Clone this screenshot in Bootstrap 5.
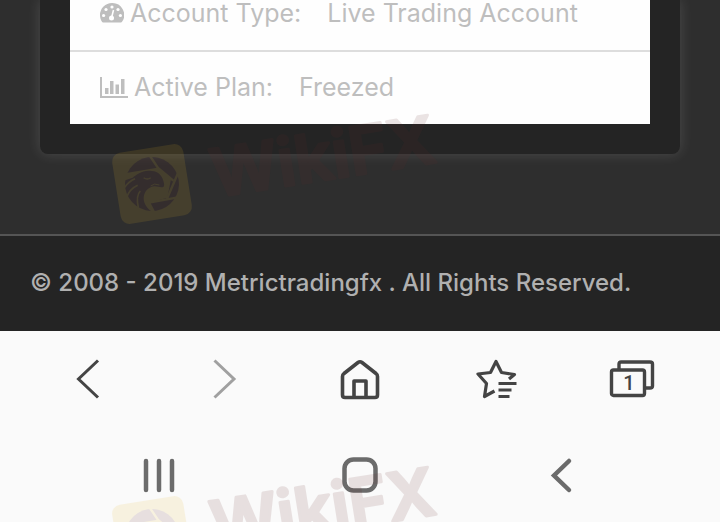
<!DOCTYPE html>
<html lang="en">
<head>
<meta charset="utf-8">
<meta name="viewport" content="width=device-width, initial-scale=1">
<title>Account details</title>
<link href="https://cdn.jsdelivr.net/npm/bootstrap@5.3.0/dist/css/bootstrap.min.css" rel="stylesheet">
<style>
  body { background: #2e2e2e; font-family: Inter, "Open Sans", sans-serif; font-size: 24px; line-height: 30px; font-weight: 500; }
  .account-panel { background: #242424; margin: 0 40px 80px; padding: 0 30px 30px; border-radius: 0 0 8px 8px; box-shadow: 0 0 14px rgba(255,255,255,.14); }
  .detail-list { background: #fefefe; color: #bebebe; font-size: 25px; font-weight: 400; }
  .detail-row { padding: 20px 30px 22px; }
  .detail-row:first-child { padding-top: 0; padding-bottom: 24px; line-height: 26px; border-bottom: 2px solid #ddd; }
  .detail-label { gap: 6px; margin-right: 26px; }
  .site-footer { background: #242424; color: #b0b0b0; border-top: 2px solid #555; padding: 32px 30px 33px; }
  .device-bars { background: #fafafa; color: #444; }
  .bar-row { height: 96px; padding: 0 20px; }
  .system-row { padding: 0 58px; color: #6b6b6b; }
  .bar-btn { flex: 1 1 0; height: 96px; padding: 0; border: 0; background: none; color: inherit; line-height: 1; }
  .bar-btn:disabled { color: #a0a0a0; }
  .stamp-layer { pointer-events: none; }
</style>
<script src="https://cdn.jsdelivr.net/npm/bootstrap@5.3.0/dist/js/bootstrap.bundle.min.js"></script>
</head>
<body class="overflow-hidden">
<div class="position-relative overflow-hidden">
  <main>
    <section class="account-panel">
      <dl class="detail-list mb-0">
        <div class="detail-row d-flex">
          <dt class="detail-label d-flex align-items-center fw-normal"><svg width="24" height="20" viewBox="0 0 24 20" aria-hidden="true"><path fill="currentColor" d="M12 0A12 12 0 0 0 0 12c0 2.600.6 4.600 1.800 6.600.3.600.8.900 1.400.900h17.600c.6 0 1.100-.3 1.400-.9A12 12 0 0 0 12 0z"/><g fill="#fff"><circle cx="12" cy="4" r="1.600"/><circle cx="6" cy="6.500" r="1.600"/><circle cx="18" cy="6.500" r="1.600"/><circle cx="3.600" cy="12.500" r="1.600"/><circle cx="20.400" cy="12.500" r="1.600"/><circle cx="11.500" cy="15" r="2.500"/></g><path d="M11.500 15l2-8" stroke="#fff" stroke-width="1.500"/></svg><span>Account Type:</span></dt>
          <dd class="mb-0">Live Trading Account</dd>
        </div>
        <div class="detail-row d-flex">
          <dt class="detail-label d-flex align-items-center fw-normal"><svg width="28" height="21" viewBox="0 0 28 21" aria-hidden="true"><path fill="currentColor" d="M0 0h2v19h26v2H0zM5 11h3.500v6H5zM10 4h3.500v13H10zM15.500 7.500H19V17h-3.500zM21 2h3.500v15H21z"/></svg><span>Active Plan:</span></dt>
          <dd class="mb-0">Freezed</dd>
        </div>
      </dl>
    </section>
  </main>
  <footer class="site-footer">© 2008 - 2019 Metrictradingfx . All Rights Reserved.</footer>
  <div class="device-bars">
    <nav class="bar-row d-flex" aria-label="Browser">
      <button class="bar-btn" type="button" aria-label="Back"><svg width="44" height="44" viewBox="0 0 44 44" fill="none" stroke="currentColor" stroke-width="3"><path d="M32 3.500L12.500 22 32 40.500"/></svg></button>
      <button class="bar-btn" type="button" aria-label="Forward" disabled><svg width="44" height="44" viewBox="0 0 44 44" fill="none" stroke="currentColor" stroke-width="3"><path d="M12.500 3.500L32 22 12.500 40.500"/></svg></button>
      <button class="bar-btn" type="button" aria-label="Home"><svg width="44" height="44" viewBox="0 0 44 44" fill="none" stroke="currentColor" stroke-width="3.600" stroke-linejoin="round"><path d="M6 16.500Q4.500 17.500 4.500 19.500V38Q4.500 40.500 7 40.500H37Q39.500 40.500 39.500 38V19.500Q39.500 17.500 38 16.500L24 5.500Q22 4 20 5.500zM16 40V24H28V40"/></svg></button>
      <button class="bar-btn" type="button" aria-label="Bookmarks"><svg width="44" height="44" viewBox="0 0 44 44" fill="none" stroke="currentColor" stroke-width="3.200"><path stroke-linejoin="round" d="M20.500 34L10.500 39.500 12.500 26.500 4 17 16.500 15.500 22 4.500 27.500 15.500 40.500 17.500 35 22"/><path d="M24.500 26.500h18M24.500 33h13M24.500 39.500h11"/></svg></button>
      <button class="bar-btn" type="button" aria-label="Tabs, 1 open"><svg width="46" height="44" viewBox="0 0 46 44" fill="none" stroke="currentColor" stroke-width="3.400" stroke-linejoin="round"><path d="M10 12V7Q10 5 12 5H41Q43.500 5 43.500 7V29Q43.500 31 41 31H36"/><rect x="2.500" y="13" width="33" height="25.500" rx="2"/><text x="20" y="33" fill="currentColor" stroke="none" text-anchor="middle" font-family="Roboto, sans-serif" font-size="20" font-weight="500">1</text></svg></button>
    </nav>
    <nav class="bar-row system-row d-flex" aria-label="System">
      <button class="bar-btn" type="button" aria-label="Recent apps"><svg width="40" height="40" viewBox="0 0 40 40" stroke="currentColor" stroke-width="4.500" stroke-linecap="round"><path d="M7 6v29M20 6v29M33 6v29"/></svg></button>
      <button class="bar-btn" type="button" aria-label="Home screen"><svg width="40" height="40" viewBox="0 0 40 40" fill="none" stroke="currentColor" stroke-width="4.500"><rect x="4.500" y="4.500" width="31" height="31" rx="9"/></svg></button>
      <button class="bar-btn" type="button" aria-label="Previous"><svg width="40" height="40" viewBox="0 0 40 40" fill="none" stroke="currentColor" stroke-width="4.500" stroke-linecap="round"><path d="M28 6L13 20.500 28 35"/></svg></button>
    </nav>
  </div>
  <svg class="stamp-layer position-absolute top-0 start-0 w-100 h-100" aria-hidden="true">
    <defs>
      <g id="stamp" transform="rotate(-9)" opacity=".12">
        <rect x="-36" y="-36" width="72" height="72" rx="9" fill="#e8b828"/>
        <circle r="27" fill="#622828"/>
        <g transform="rotate(9) scale(.3333) translate(-186 -252)">
          <path fill="#e8b828" d="M104 220L202 203 243 237 232 293 178 308 192 337 184 334C150 310 158 272 182 262C195 255 207 263 216 262Q224 263 222 250C218 228 205 214 186 213C160 208 140 223 128 233L101 242z"/>
          <path fill="none" stroke="#e8b828" stroke-width="7" d="M180 168L204 204 250 242M268 210L231 296M260 293L177 308 194 340"/>
          <path fill="none" stroke="#e8b828" stroke-width="5" d="M135 236Q116 244 104 262M143 256Q119 267 110 292M151 273Q137 287 145 323"/>
          <path fill="none" stroke="#e8b828" stroke-width="4" d="M161 233Q172 241 182 233"/>
          <path fill="none" stroke="#e8b828" stroke-width="3" d="M182 258Q193 248 208 255"/>
        </g>
        <text x="60" y="23" fill="#622828" stroke="#622828" stroke-width="3" stroke-linejoin="round" font-family="Inter, sans-serif" font-size="66" font-weight="600">WikiFX</text>
      </g>
    </defs>
    <use href="#stamp" x="152" y="184"/>
    <use href="#stamp" x="152" y="536"/>
  </svg>
</div>
</body>
</html>
